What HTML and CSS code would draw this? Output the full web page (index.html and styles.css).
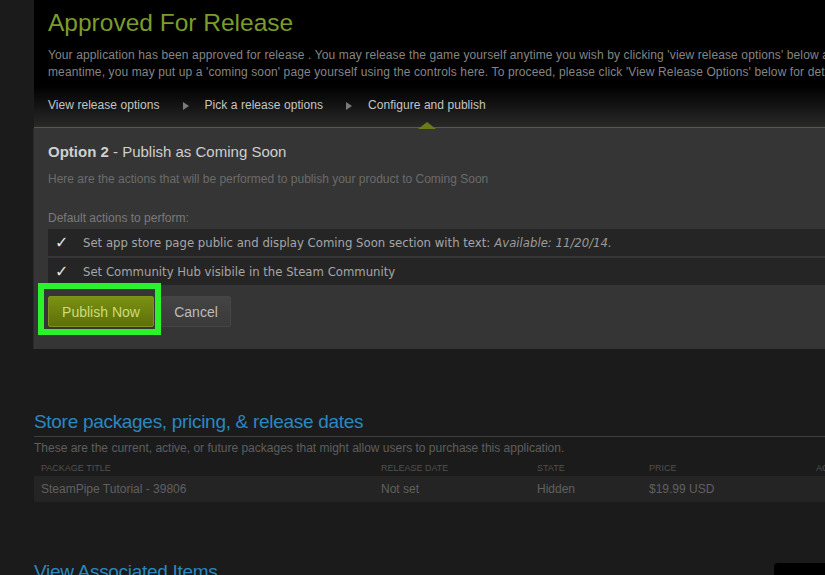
FILE: index.html
```html
<!DOCTYPE html>
<html lang="en">

<head>
    <meta charset="UTF-8">
    <meta name="viewport" content="width=device-width, initial-scale=1.0">
    <link rel="stylesheet" href="styles.css">
    <title>Approved For Release</title>
</head>

<body>
    <div class="page">
        <section class="release">
            <h1>Approved For Release</h1>
            <p class="intro">
                Your application has been approved for release . You may release the game yourself anytime you wish by clicking 'view release options' below and follow the instructions there. In the<br>
                meantime, you may put up a 'coming soon' page yourself using the controls here. To proceed, please click 'View Release Options' below for details.
            </p>
            <nav class="steps">
                <span>View release options</span>
                <i class="arrow"></i>
                <span>Pick a release options</span>
                <i class="arrow"></i>
                <span class="current">Configure and publish</span>
            </nav>
        </section>

        <section class="option">
            <h2><b>Option 2</b> - Publish as Coming Soon</h2>
            <p class="hint">Here are the actions that will be performed to publish your product to Coming Soon</p>
            <p class="label">Default actions to perform:</p>
            <div class="actions">
                <div class="action"><span class="check">✓</span>Set app store page public and display Coming Soon section with text: <em>Available: 11/20/14.</em></div>
                <div class="action"><span class="check">✓</span>Set Community Hub visibile in the Steam Community</div>
            </div>
            <div class="buttons">
                <button class="btn publish">Publish Now</button>
                <button class="btn cancel">Cancel</button>
            </div>
        </section>

        <section class="packages">
            <h2 class="section-title">Store packages, pricing, &amp; release dates</h2>
            <p class="note">These are the current, active, or future packages that might allow users to purchase this application.</p>
            <div class="table">
                <div class="row head">
                    <span>Package title</span>
                    <span>Release date</span>
                    <span>State</span>
                    <span>Price</span>
                    <span>Actions</span>
                </div>
                <div class="row">
                    <span>SteamPipe Tutorial - 39806</span>
                    <span>Not set</span>
                    <span>Hidden</span>
                    <span>$19.99 USD</span>
                    <span></span>
                </div>
            </div>
        </section>

        <h2 class="section-title assoc">View Associated Items</h2>
    </div>
    <div class="corner"></div>
</body>

</html>
```

FILE: styles.css
```css
html,
body {
    height: 100%;
    overflow: hidden;
}

body {
    margin: 0;
    padding: 0;
    background-color: #1b1b1b;
    font-family: 'Liberation Sans', Arial, sans-serif;
    font-size: 12px;
}

.page {
    margin-left: 34px;
    width: 1100px;
}

/* top banner */
.release {
    height: 128px;
    box-sizing: border-box;
    padding: 8px 14px 0;
    background: linear-gradient(to bottom, #000 0, #000 86px, #2a2a2a 128px);
    border-bottom: 1px solid #56612a;
}

.release h1 {
    margin: 0;
    font-size: 24.5px;
    font-weight: normal;
    line-height: 30px;
    color: #7b9c2b;
}

.intro {
    margin: 9px 0 0;
    line-height: 17px;
    letter-spacing: 0.12px;
    color: #858585;
    white-space: nowrap;
}

.steps {
    display: flex;
    align-items: center;
    margin-top: 16px;
    line-height: 17px;
    letter-spacing: 0.05px;
    color: #c4c4c4;
}

.arrow {
    width: 0;
    height: 0;
    margin: 0 16px 0 23px;
    border-top: 4px solid transparent;
    border-bottom: 4px solid transparent;
    border-left: 6px solid #7a7a7a;
}

.current {
    position: relative;
}

.current::after {
    content: "";
    position: absolute;
    left: 50%;
    bottom: -15px;
    margin-left: -9px;
    border-left: 9px solid transparent;
    border-right: 9px solid transparent;
    border-bottom: 7px solid #6a7c17;
}

/* option panel */
.option {
    padding: 14px 0 22px 14px;
    background-color: #353535;
    border-left: 1px solid #2a2a2a;
    margin-left: -1px;
}

.option h2 {
    margin: 0;
    font-size: 15px;
    font-weight: normal;
    line-height: 20px;
    color: #cfcfcf;
}

.hint {
    margin: 9px 0 0;
    line-height: 16px;
    color: #6b6b6b;
}

.label {
    margin: 23px 0 0;
    line-height: 16px;
    color: #7a7a7a;
}

.actions {
    display: flex;
    flex-direction: column;
    gap: 2px;
    margin-top: 3px;
}

.action {
    display: flex;
    align-items: center;
    height: 27px;
    padding-left: 7px;
    background-color: #252525;
    font-family: 'DejaVu Sans', Verdana, sans-serif;
    font-size: 11.7px;
    color: #a6a6a6;
}

.action em {
    margin-left: 4px;
    color: #9a9a9a;
}

.check {
    width: 28px;
    font-size: 16px;
    font-weight: bold;
    color: #e4e4e4;
}

.buttons {
    display: flex;
    gap: 7px;
    margin-top: 11px;
}

.btn {
    height: 31px;
    padding: 0;
    border-radius: 2px;
    font-family: 'Liberation Sans', Arial, sans-serif;
    font-size: 14px;
    white-space: nowrap;
}

.publish {
    position: relative;
    width: 106px;
    border: 1px solid #7d9320;
    background: linear-gradient(to bottom, #7a9112 0, #5d700a 100%);
    color: #cddc7a;
}

.publish::after {
    content: "";
    position: absolute;
    top: -14px;
    left: -11px;
    right: -8px;
    bottom: -9px;
    border: 6px solid #2cf22c;
}

.cancel {
    width: 70px;
    border: 1px solid #454545;
    background: linear-gradient(to bottom, #444 0, #3a3a3a 100%);
    color: #bcbcbc;
}

/* packages */
.section-title {
    margin: 0;
    font-size: 19px;
    font-weight: normal;
    line-height: 24px;
    letter-spacing: -0.3px;
    color: #2a88c0;
}

.packages {
    margin-top: 61px;
}

.packages .section-title {
    padding-bottom: 2px;
    border-bottom: 1px solid #3e3e3e;
}

.note {
    margin: 3px 0 0;
    line-height: 16px;
    color: #5e5e5e;
}

.table {
    margin-top: 4px;
}

.row {
    display: grid;
    grid-template-columns: 340px 156px 112px 167px 100px;
    padding-left: 7px;
    align-items: center;
}

.row.head {
    height: 16px;
    font-size: 9px;
    text-transform: uppercase;
    color: #505050;
}

.row:not(.head) {
    height: 26px;
    background-color: #242424;
    color: #606060;
}

.assoc {
    margin-top: 58px;
}

.corner {
    position: fixed;
    right: 0;
    bottom: 0;
    width: 51px;
    height: 12px;
    background-color: #000;
    border-top-left-radius: 4px;
}
```
